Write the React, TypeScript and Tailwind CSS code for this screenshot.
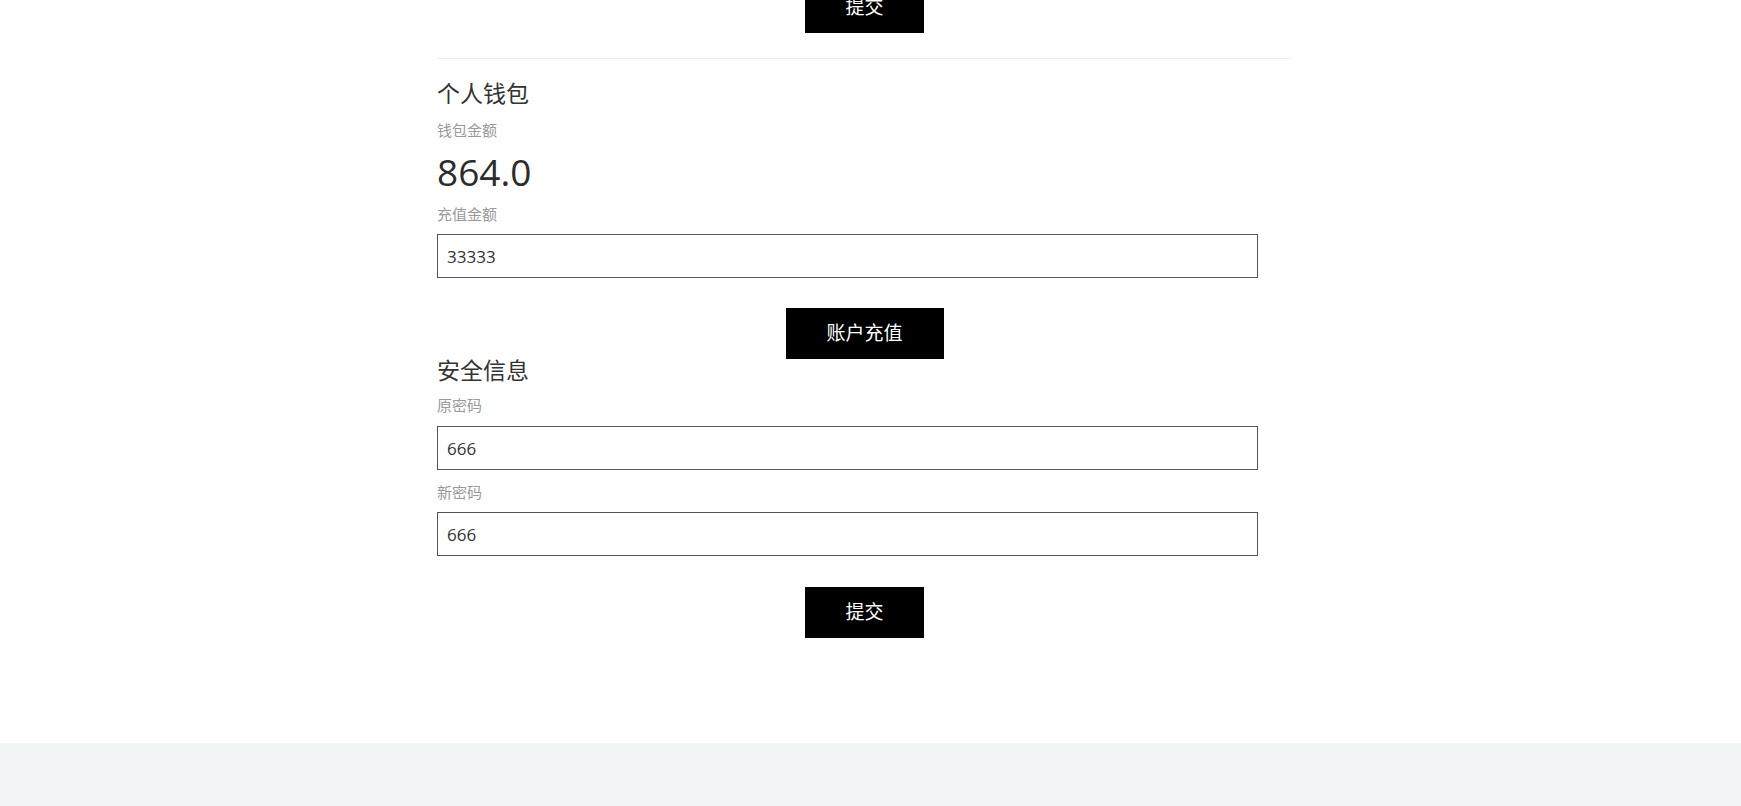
import { useState } from "react";

const FONT = "font-['Open_Sans','Noto_Sans_CJK_SC',sans-serif]";

function Field({
  label,
  value,
  onChange,
  labelGap,
  inputGap,
}: {
  label: string;
  value: string;
  onChange: (v: string) => void;
  labelGap: string;
  inputGap: string;
}) {
  return (
    <div>
      <p className={`${labelGap} text-[15px] leading-[20px] text-[#999]`}>{label}</p>
      <input
        className={`${inputGap} block h-[44px] w-[821px] border border-[#555] px-[9px] text-[17px] text-[#333] outline-none`}
        value={value}
        onChange={(e) => onChange(e.target.value)}
      />
    </div>
  );
}

export default function App() {
  const [amount, setAmount] = useState("33333");
  const [oldPwd, setOldPwd] = useState("666");
  const [newPwd, setNewPwd] = useState("666");

  return (
    <main className={`min-h-screen bg-white ${FONT}`}>
      <div className="flex justify-center pr-[12px]">
        <section className="w-[855px]">
          {/* profile form submit (tail of the previous block) */}
          <div className="-mt-[18px] flex justify-center">
            <button className="h-[51px] w-[119px] bg-black text-[19px] text-white">提交</button>
          </div>

          <div className="mt-[25px] border-t border-[#eee]" />

          {/* wallet */}
          <h2 className="mt-[23px] text-[23px] leading-[22px] text-[#333]">个人钱包</h2>
          <p className="mt-[16px] text-[15px] leading-[20px] text-[#999]">钱包金额</p>
          <p className="mt-[12px] text-[37px] leading-[40px] text-[#2c2c2c]">864.0</p>
          <Field
            label="充值金额"
            value={amount}
            onChange={setAmount}
            labelGap="mt-[12px]"
            inputGap="mt-[10px]"
          />
          <div className="mt-[30px] flex justify-center">
            <button className="h-[51px] w-[158px] bg-black text-[19px] text-white">账户充值</button>
          </div>

          {/* security */}
          <h2 className="text-[23px] leading-[22px] text-[#333]">安全信息</h2>
          <Field
            label="原密码"
            value={oldPwd}
            onChange={setOldPwd}
            labelGap="mt-[14px]"
            inputGap="mt-[11px]"
          />
          <Field
            label="新密码"
            value={newPwd}
            onChange={setNewPwd}
            labelGap="mt-[12px]"
            inputGap="mt-[10px]"
          />
          <div className="mt-[31px] flex justify-center">
            <button className="h-[51px] w-[119px] bg-black text-[19px] text-white">提交</button>
          </div>
        </section>
      </div>

      <footer className="mt-[105px] h-[200px] bg-[#f2f5f6]" />
    </main>
  );
}
